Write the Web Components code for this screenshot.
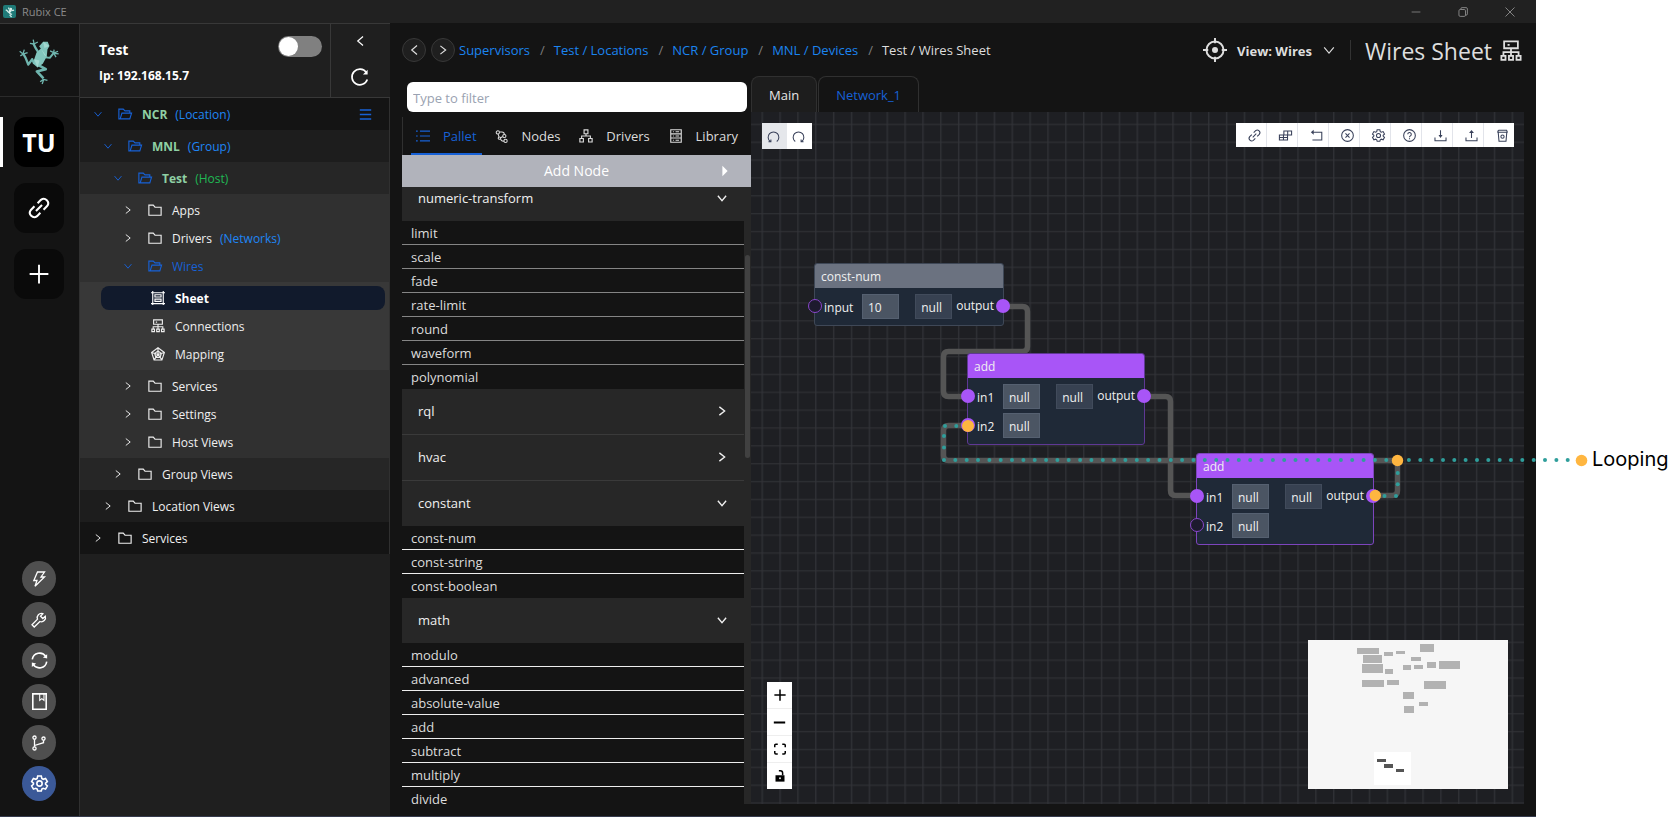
<!DOCTYPE html>
<html lang="en">
<head>
<meta charset="utf-8">
<title>Rubix CE</title>
<style>
  body { margin: 0; background: #fff; font-family: "Open Sans", "Noto Sans", sans-serif; font-size: 13px; }
</style>
</head>
<body>
<rx-app></rx-app>

<script>
const CSS = `
  *, *::before, *::after { box-sizing: border-box; }
  button { font: inherit; color: inherit; background: none; border: 0; padding: 0; margin: 0; cursor: pointer; }
  a { color: inherit; text-decoration: none; }
  ul { list-style: none; margin: 0; padding: 0; }
`;
function define(name, template) {
  customElements.define(name, class extends HTMLElement {
    connectedCallback() {
      if (this.shadowRoot) return;
      const root = this.attachShadow({ mode: 'open' });
      const html = typeof template === 'function' ? template(this) : template;
      root.innerHTML = `<style>${CSS}</style>${html}`;
    }
  });
}

/* Icons: 16-unit grid, drawn with the current colour */
const ICONS = {
  down: '<path d="M2.5 5 8 11.5 13.5 5"/>',
  right: '<path d="M4.5 2.5 11.5 8 4.5 13.5"/>',
  left: '<path d="M12 2 5 8l7 6"/>',
  folder: '<path d="M1 2.500h5l2 2.300h7v9.200H1z"/>',
  open: '<path d="M2.500 13.500H1V2.500h5l2 2h5.500V7M2.500 13.500 4.500 7h11l-2 6.500z"/>',
  menu: '<path d="M1 2.500h14M1 8h14M1 13.500h14" stroke-width="1.800"/>',
  reload: '<path d="M14.500 10.200A7 7 0 1 1 13.600 3.900"/><path d="M14.800 1.500v4.200h-4.200z" fill="currentColor" stroke="none"/>',
  link: '<path d="M7 4.500 9.400 2.100a3.200 3.200 0 0 1 4.500 4.500L11.300 9.200M9 11.500l-2.400 2.400a3.200 3.200 0 0 1-4.500-4.500L4.700 6.800M10.200 5.800 5.800 10.200"/>',
  plus: '<path d="M8 .5v15M.5 8h15"/>',
  minus: '<path d="M1 8h14"/>',
  bolt: '<path d="M6.500 1h7L10 6h3.500L4 15.300 6 9.500H2.800z"/>',
  wrench: '<path d="M14.300 4.200 11.800 6.500 9.500 4.200 11.800 1.700a4.200 4.200 0 0 0-5.300 5.500L1 12.800 3.200 15l5.700-5.500a4.200 4.200 0 0 0 5.400-5.300z"/>',
  sync: '<path d="M1.200 7A7 7 0 0 1 14 4.300M14.800 9A7 7 0 0 1 2 11.700"/><path d="M15.200 2v4.200l-4-1zM.8 14V9.800l4 1z" fill="currentColor" stroke="none"/>',
  book: '<path d="M1.700.8h12.600v14.500H1.700z"/><path d="M8.200 1v6l2-1.700 2 1.700V1" stroke-width="1"/>',
  branch: '<circle cx="3.500" cy="2.600" r="1.600"/><circle cx="3.500" cy="13.400" r="1.600"/><circle cx="12.500" cy="3.600" r="1.600"/><path d="M3.500 4.200v7.600M12.500 5.200v2.500L3.500 10.500"/>',
  gear: '<path d="M6.300 1h3.400l.5 2.200 1.300.8 2.200-.8 1.700 3-1.700 1.500v1l1.700 1.600-1.700 3-2.200-.8-1.300.8L9.700 15H6.300l-.5-1.700-1.300-.8-2.200.8-1.700-3 1.700-1.600v-1L.6 6.200l1.700-3 2.200.8 1.300-.8z"/><circle cx="8" cy="8" r="2.500"/>',
  sheet: '<path d="M2 0v16M14 0v16M0 2h16M0 14.500h16M4.500 4.300h7v2.500h-7zM4.500 9.300h7v2.500h-7z"/>',
  cluster: '<path d="M3 1h10v5H3zM8 6v5M2.500 11.200V8.800h11v2.400M1 11.500h3V14.500H1zM6.500 11.500h3V14.500h-3zM12 11.500h3V14.500h-3zM5.500 3.500h1.500"/>',
  radar: '<path d="M8 .8 15.300 6.200 12.500 14.800H3.500L.7 6.200zM8 4.500l3.800 2.800-1.400 4.500H5.600L4.200 7.300zM8 .8v7.700M15.300 6.200 8 8.500M12.500 14.800 8 8.500M3.500 14.800 8 8.500M.7 6.200 8 8.500"/>',
  list: '<path d="M4.500 2.500H16M4.500 8H16M4.500 13.500H16M0 2.500h2M0 8h2M0 13.500h2"/>',
  nodes: '<circle cx="3.500" cy="3" r="2"/><circle cx="11.500" cy="7.500" r="2"/><circle cx="5.500" cy="10" r="1.500"/><circle cx="13" cy="13.500" r="2"/><path d="M5.500 2.500h3a3 3 0 0 1 3 3M4 5 4.800 8.500M7 11a3 3 0 0 0 4 2.500M9.500 8 7 9.500"/>',
  tree: '<path d="M5.800 1h4.400v4.400H5.800zM1 10.800h4v4H1zM11 10.800h4v4h-4zM8 5.500V8M3 10.800V8h10v2.800"/>',
  server: '<path d="M2 .8h12v14.400H2zM2 5.500h12M2 10.300h12M4.500 3.200h1M4.500 8h1M4.500 12.800h1M7.500 3.200h4M7.500 8h4M7.500 12.800h4"/>',
  aim: '<circle cx="8" cy="8" r="5.700"/><circle cx="8" cy="8" r="2" fill="currentColor" stroke="none"/><path d="M8 0v3.500M8 12.500V16M0 8h3.500M12.500 8H16"/>',
  undo: '<path d="M4 14.200A6.600 6.600 0 1 1 12 14.200M1.800 14.500h3v-2.800"/>',
  redo: '<path d="M12 14.200A6.600 6.600 0 1 0 4 14.200M14.200 14.500h-3v-2.800"/>',
  blocks: '<path d="M6 2.500h9.500v5H6zM.5 7.500h10v6H.5zM10.700 2.500v5M5.500 7.500v6M.5 10.500h10"/>',
  rollback: '<path d="M2.500 4h12v9.500H3"/><path d="M4.500 1v6L1 4z" fill="currentColor" stroke="none"/>',
  close: '<circle cx="8" cy="8" r="7.200"/><path d="m5.500 5.500 5 5M10.500 5.500l-5 5"/>',
  help: '<circle cx="8" cy="8" r="7.200"/><path d="M5.800 6.500a2.200 2.200 0 1 1 3.200 2c-.7.400-1 .8-1 1.500M8 11.300v1.200"/>',
  download: '<path d="M1.200 10.500v4h13.600v-4M8 1.500V9"/><path d="M5.500 7.500h5L8 11z" fill="currentColor" stroke="none"/>',
  upload: '<path d="M1.200 10.500v4h13.600v-4M8 11V4"/><path d="M5 5h6L8 1.200z" fill="currentColor" stroke="none"/>',
  bin: '<path d="M1.500 4h13M3 1.500h10l1 2.500M3 1.500 2 4M2.700 4l1 11h8.600l1-11"/><circle cx="8" cy="9.500" r="2"/>',
  fit: '<path d="M1 5.500V3A1.500 1.500 0 0 1 2.500 1.500h2.500M11 1.500h2.500A1.500 1.500 0 0 1 15 3v2.500M15 10.500V13a1.500 1.500 0 0 1-1.500 1.500H11M5 14.500H2.500A1.500 1.500 0 0 1 1 13v-2.500"/>',
  lock: '<path d="M2 7h12v8.500H2z" fill="currentColor" stroke="none"/><path d="M6.500 1h2A3 3 0 0 1 11.500 4v3"/><circle cx="8" cy="11" r="1.200" fill="#fff" stroke="none"/>',
  caret: '<path d="M5 2v12l6-6z" fill="currentColor" stroke="none"/>',
  winmin: '<path d="M1 8h14"/>',
  winmax: '<rect x="1.500" y="4" width="10.500" height="11" rx="2"/><path d="M4.500 4V3a2 2 0 0 1 2-2H13a2 2 0 0 1 2 2v8a2 2 0 0 1-2 2h-1"/>',
  winclose: '<path d="m.8.800 14.400 14.400M15.200.800.8 15.200"/>',
  frog: '<g fill="currentColor" stroke="none"><path d="M8.300 1.200 11 1.500 11.500 4 10 7 7.500 10.500 5.500 9.500 6 6z"/></g><path d="M7 4 5.500 1M10.500 6l4-1M6 9 3.500 6 1.200 4.500M7 10l3 1.500-2 1.500 2.500 3"/>'
};
define('rx-icon', el => `
  <style>
    :host { display: inline-flex; flex: none; }
    svg { display: block; overflow: visible; }
  </style>
  <svg width="${el.getAttribute('size') || 14}" height="${el.getAttribute('size') || 14}" viewBox="0 0 16 16" fill="none"
    stroke="currentColor" stroke-width="${el.getAttribute('weight') || 1.3}" aria-hidden="true">${ICONS[el.getAttribute('name')] || ''}</svg>`);

define('rx-app', `
  <style>
    :host { display: block; margin-right: 132px; }
    .app { display: flex; flex-direction: column; height: 100vh; background: #141414; border-bottom: 1px solid #353a4c; }
    .body { flex: 1; display: flex; min-height: 0; }
    main { flex: 1; min-width: 0; display: flex; flex-direction: column; padding: 0 12px; }
    .work { flex: 1; min-height: 0; display: grid; grid-template-columns: 349px minmax(0, 1fr); padding-bottom: 12px; }
  </style>
  <div class="app">
    <rx-titlebar></rx-titlebar>
    <div class="body">
      <rx-rail></rx-rail>
      <rx-host-panel></rx-host-panel>
      <main>
        <rx-topbar></rx-topbar>
        <div class="work">
          <rx-palette></rx-palette>
          <rx-sheet></rx-sheet>
        </div>
      </main>
    </div>
  </div>`);

define('rx-titlebar', `
  <style>
    :host { display: flex; align-items: center; height: 23px; background: #212121; color: #8a8a8a; font-size: 11px; padding: 0 3px; }
    .logo { display: grid; place-items: center; width: 13px; height: 13px; margin-right: 6px; border-radius: 2px; background: #1f7a78; color: #d6eeea; }
    .title { flex: 1; }
    button { display: grid; place-items: center; width: 47px; height: 23px; }
  </style>
  <span class="logo"><rx-icon name="frog" size="10" weight="2"></rx-icon></span>
  <span class="title">Rubix CE</span>
  <button aria-label="Minimise"><rx-icon name="winmin" size="10"></rx-icon></button>
  <button aria-label="Restore"><rx-icon name="winmax" size="10" weight="1.500"></rx-icon></button>
  <button aria-label="Close"><rx-icon name="winclose" size="10" weight="1.500"></rx-icon></button>`);

define('rx-rail', `
  <style>
    :host { display: flex; flex-direction: column; align-items: center; width: 80px; flex: none; border-right: 1px solid #303030; border-top: 1px solid #383838; color: #fff; padding-bottom: 15px; }
    .brand { display: grid; place-items: center; width: 100%; height: 73px; padding-top: 2px; border-bottom: 1px solid #2b2b2b; }
    .spaces { display: flex; flex-direction: column; align-items: center; gap: 16px; width: 100%; margin-top: 20px; flex: 1; }
    .spaces div { width: 100%; display: flex; justify-content: center; border: solid transparent; border-width: 0 4px 0 3px; }
    .spaces .on { border-left-color: #fff; }
    .spaces button { width: 50px; height: 50px; border-radius: 12px; background: #0a0a0a; display: grid; place-items: center; }
    .spaces .on button { background: #000; font-size: 25px; font-weight: 700; line-height: 34px; }
    nav { display: flex; flex-direction: column; gap: 6px; padding-right: 1px; }
    nav button { width: 34px; height: 35px; border-radius: 50%; background: #4f4f4f; display: grid; place-items: center; }
    nav button.cfg { background: #3b5998; }
  </style>
  <div class="brand">
    <svg width="41" height="47" viewBox="58 118 124 142" role="img" aria-label="Rubix">
      <g fill="none" stroke="#6fb5ae" stroke-linejoin="round">
        <path d="M117 162 108 148 102 135" stroke-width="7"/>
        <path d="M104 196 98 182 86 198 78 178 70 164" stroke-width="7"/>
        <path d="M138 176 151 178 163 163" stroke-width="6"/>
        <path d="M110 196 139 212 112 219 132 240" stroke-width="8"/>
        <path d="M91 134 103 136 115 130M101 123 104 138M60 158 70 166 74 153M62 172 72 166 84 162M152 157 165 163 176 158M164 153 163 164 170 176M178 166 163 164M122 250 132 243 144 246M128 257 133 243" stroke-width="4"/>
      </g>
      <path d="M119 143 131 129 145 129 150 142 144 153 142 174 130 196 114 207 101 196 104 182 111 162 124 150z" fill="#82c5bd"/>
      <path d="M131 129 135 148 150 142M124 150 135 170 142 174M104 182 120 186 114 207z" fill="#a3d8d0"/>
    </svg>
  </div>
  <div class="spaces">
    <div class="on"><button>TU</button></div>
    <div><button aria-label="Connections"><rx-icon name="link" size="22" weight="1.500"></rx-icon></button></div>
    <div><button aria-label="Add"><rx-icon name="plus" size="20" weight="1.500"></rx-icon></button></div>
  </div>
  <nav aria-label="Tools">
    <button aria-label="Actions"><rx-icon name="bolt" size="16"></rx-icon></button>
    <button aria-label="Tools"><rx-icon name="wrench" size="16"></rx-icon></button>
    <button aria-label="Sync"><rx-icon name="sync" size="17" weight="1.500"></rx-icon></button>
    <button aria-label="Docs"><rx-icon name="book" size="17" weight="1.500"></rx-icon></button>
    <button aria-label="Releases"><rx-icon name="branch" size="16"></rx-icon></button>
    <button class="cfg" aria-label="Settings"><rx-icon name="gear" size="17" weight="1.500"></rx-icon></button>
  </nav>`);

/* One tree row: level sets the indent; leaf names the icon of a page inside a folder */
define('rx-row', el => {
  const a = n => el.getAttribute(n);
  const open = el.hasAttribute('open');
  const leaf = a('leaf');
  return `
  <style>
    :host { display: block; color: #f0f0f0; font-size: 12px; line-height: 16px; }
    button { display: flex; align-items: center; width: 100%; height: ${a('h') || 28}px; text-align: left; padding-left: ${13 + 10 * (a('level') || 0)}px; }
    .chev { margin-right: 15px; }
    .icon { margin-right: 10px; }
    .blue { color: #1761d6; }
    .text { display: flex; gap: 8px; padding-top: 2px; }
    .main { color: #8fd0a4; font-weight: 700; }
    ::slotted(i) { font-style: normal; color: ${a('tone') || '#1f86f5'}; }
    .cell { padding: 2px 4px 2px 21px; }
    .leaf { height: 24px; padding-left: 50px; border-radius: 8px; color: #eee; }
    .sel { background: #111a2c; color: #fff; font-weight: 700; }
  </style>
  ${leaf ? `<div class="cell"><button class="leaf ${el.hasAttribute('selected') ? 'sel' : ''}"><rx-icon class="icon" name="${leaf}" size="14"></rx-icon><span class="text"><slot></slot></span></button></div>`
  : `<button aria-expanded="${open}">
    <rx-icon class="chev ${open ? 'blue' : ''}" name="${open ? 'down' : 'right'}" size="10" weight="1.500"></rx-icon>
    <rx-icon class="icon ${open ? 'blue' : ''}" name="${open ? 'open' : 'folder'}" size="14"></rx-icon>
    <span class="text ${el.hasAttribute('plain') ? 'blue' : ''}"><span class="${open && !el.hasAttribute('plain') ? 'main' : ''}"><slot></slot></span><slot name="kind"></slot></span>
  </button>`}`;
});

define('rx-host-panel', `
  <style>
    :host { display: flex; flex-direction: column; width: 310px; flex: none; background: #1f1f1f; color: #fff; border-top: 1px solid #383838; }
    header { display: flex; height: 74px; border-bottom: 1px solid #383838; }
    .info { flex: 1; padding: 12px 8px 0 19px; display: flex; justify-content: space-between; }
    .info strong { display: block; font-size: 14px; line-height: 28px; }
    .info small { display: block; font-size: 12px; font-weight: 700; line-height: 24px; }
    input { appearance: none; margin: 0; width: 44px; height: 21px; border-radius: 11px; background: #808080; display: flex; align-items: center; padding: 1px; }
    input::before { content: ""; width: 19px; height: 19px; border-radius: 50%; background: #fff; }
    .side { width: 60px; border-left: 1px solid #383838; display: flex; flex-direction: column; align-items: center; gap: 21px; padding: 11px 2px 0 0; }
    .side button { display: flex; }
    .tree { border-right: 1px solid #303030; }
    .l0 { background: #141414; } .l1 { background: #1d1d1d; } .l2 { background: #262626; }
    .l3 { background: #303030; padding: 2px 0; } .l4 { background: #383838; padding: 2px 0; }
    .l0.head { position: relative; }
    .menu { position: absolute; right: 17px; top: 10px; color: #1761d6; display: flex; }
  </style>
  <header>
    <div class="info">
      <div><strong>Test</strong><small>Ip: 192.168.15.7</small></div>
      <input type="checkbox" role="switch" aria-label="Enable host">
    </div>
    <div class="side">
      <button aria-label="Collapse"><rx-icon name="left" size="12" weight="1.600"></rx-icon></button>
      <button aria-label="Refresh"><rx-icon name="reload" size="18" weight="1.500"></rx-icon></button>
    </div>
  </header>
  <div class="tree">
    <div class="l0 head"><rx-row h="32" level="0" open>NCR<i slot="kind">(Location)</i></rx-row><button class="menu" aria-label="Menu"><rx-icon name="menu" size="13"></rx-icon></button></div>
    <div class="l1"><rx-row h="32" level="1" open>MNL<i slot="kind">(Group)</i></rx-row></div>
    <div class="l2"><rx-row h="32" level="2" open tone="#20b854">Test<i slot="kind">(Host)</i></rx-row></div>
    <div class="l3">
      <rx-row level="3">Apps</rx-row>
      <rx-row level="3">Drivers<i slot="kind">(Networks)</i></rx-row>
      <rx-row level="3" open plain>Wires</rx-row>
    </div>
    <div class="l4">
      <rx-row leaf="sheet" selected>Sheet</rx-row>
      <rx-row leaf="cluster">Connections</rx-row>
      <rx-row leaf="radar">Mapping</rx-row>
    </div>
    <div class="l3">
      <rx-row level="3">Services</rx-row>
      <rx-row level="3">Settings</rx-row>
      <rx-row level="3">Host Views</rx-row>
    </div>
    <div class="l2"><rx-row h="32" level="2">Group Views</rx-row></div>
    <div class="l1"><rx-row h="32" level="1">Location Views</rx-row></div>
    <div class="l0"><rx-row h="32" level="0">Services</rx-row></div>
  </div>`);

define('rx-topbar', `
  <style>
    :host { display: flex; align-items: center; height: 53px; color: #dedede; line-height: 20px; padding-top: 1px; }
    .nav { display: flex; gap: 5px; margin-right: 4px; }
    .nav button { width: 24px; height: 24px; border-radius: 50%; background: #1f1f1f; border: 1px solid #383838; display: grid; place-items: center; }
    ol { display: flex; list-style: none; margin: 0; padding: 0; flex: 1; }
    li a { color: #1b84f0; }
    li + li::before { content: "/"; color: #7d7d7d; margin: 0 9px 0 10px; }
    .view { display: flex; align-items: center; gap: 10px; font-weight: 700; }
    .view span { display: block; padding-top: 1px; }
    .sep { width: 1px; height: 20px; background: #333; margin: 0 14px; }
    h1 { margin: 0; font-size: 23px; font-weight: 500; line-height: 32px; padding-top: 2px; display: flex; align-items: center; gap: 8px; padding-right: 2px; }
  </style>
  <div class="nav">
    <button aria-label="Back"><rx-icon name="left" size="12" weight="1.600"></rx-icon></button>
    <button aria-label="Forward"><rx-icon name="right" size="12" weight="1.600"></rx-icon></button>
  </div>
  <ol>
    <li><a href="#supervisors">Supervisors</a></li>
    <li><a href="#locations">Test / Locations</a></li>
    <li><a href="#group">NCR / Group</a></li>
    <li><a href="#devices">MNL / Devices</a></li>
    <li>Test / Wires Sheet</li>
  </ol>
  <button class="view" aria-haspopup="menu"><rx-icon name="aim" size="24"></rx-icon><span>View: Wires</span><rx-icon name="down" size="14"></rx-icon></button>
  <span class="sep"></span>
  <h1>Wires Sheet<rx-icon name="cluster" size="22"></rx-icon></h1>`);

const GROUPS = [
  ['numeric-transform', ['limit', 'scale', 'fade', 'rate-limit', 'round', 'waveform', 'polynomial'], 'dim'],
  ['rql'], ['hvac'],
  ['constant', ['const-num', 'const-string', 'const-boolean']],
  ['math', ['modulo', 'advanced', 'absolute-value', 'add', 'subtract', 'multiply', 'divide']]
];
define('rx-palette', `
  <style>
    :host { display: flex; flex-direction: column; min-height: 0; color: #dcdcdc; line-height: 18px; }
    .filter { margin: 6px 4px 5px 5px; height: 30px; border: 0; border-radius: 6px; background: #fff; padding: 2px 7px 0 6px; font: inherit; color: #222; }
    .filter::placeholder { color: #9aa2b1; opacity: 1; }
    .tabs { display: flex; height: 38px; border-left: 1px solid #303030; padding: 0 8px; justify-content: space-between; }
    .tabs button { display: flex; align-items: center; gap: 13px; padding: 2px 5px 0; border-bottom: 2px solid transparent; }
    .tabs .on { color: #1761d6; border-color: #1761d6; }
    .add { height: 32px; flex: none; background: #b1b3bb; color: #fff; font-size: 14px; display: grid; grid-template-columns: 1fr auto 1fr; align-items: center; }
    .add rx-icon { justify-self: end; margin-right: 19px; }
    .scroll { flex: 1; min-height: 0; display: grid; grid-template-columns: minmax(0, 1fr) 7px; overflow: hidden; margin-bottom: -6px; }
    .list { margin-top: -11px; height: 0; }
    .group { width: 100%; height: 45px; display: flex; align-items: center; justify-content: space-between; padding: 0 16px 2px; background: #272727; color: #f0f0f0; }
    .group.closed { height: 46px; border-bottom: 1px solid #3a3a3a; }
    li { height: 24px; padding: 3px 9px 0; border-bottom: 1px solid #eee; }
    .dim li { border-color: #858585; }
    ul li:last-child { border-color: transparent; }
    .bar { margin-bottom: 6px; padding: 68px 1px 0; background: #272727; }
    .bar div { height: 203px; border-radius: 3px; background: #414141; }
  </style>
  <input class="filter" type="text" placeholder="Type to filter" aria-label="Filter nodes">
  <div class="tabs">
    <button class="on"><rx-icon name="list" size="14"></rx-icon>Pallet</button>
    <button><rx-icon name="nodes" size="13"></rx-icon>Nodes</button>
    <button><rx-icon name="tree" size="14"></rx-icon>Drivers</button>
    <button><rx-icon name="server" size="14"></rx-icon>Library</button>
  </div>
  <button class="add"><span></span>Add Node<rx-icon name="caret" size="14"></rx-icon></button>
  <div class="scroll">
    <div class="list">${GROUPS.map(([name, items, cls]) => `
      <button class="group ${items ? '' : 'closed'}">${name}<rx-icon name="${items ? 'down' : 'right'}" size="12" weight="1.800"></rx-icon></button>
      ${items ? `<ul class="${cls || ''}">${items.map(i => `<li>${i}</li>`).join('')}</ul>` : ''}`).join('')}
    </div>
    <div class="bar"><div></div></div>
  </div>`);

/* A flow node: inputs come from the "in" attribute as name:value pairs, a third part marks a wired port */
define('rx-node', el => {
  const tone = el.getAttribute('tone'), edge = el.getAttribute('edge');
  const ins = el.getAttribute('in').split(',').map(s => s.split(':'));
  return `
  <style>
    :host { display: block; color: #f0f0f0; font-size: 12px; line-height: 16px; }
    .node { background: #1f2937; border: 1px solid ${edge}; border-radius: 3px; }
    .title { height: 24px; padding: 5px 6px 0; background: ${tone}; border-radius: 2px 2px 0 0; }
    .ports { display: grid; grid-template-columns: auto 1fr; padding: 6px 0; }
    .ins { display: grid; grid-template-columns: ${el.getAttribute('cols')} 37px; gap: 4px 0; }
    .ins label { display: contents; }
    .name { padding: 6px 0 0 9px; position: relative; }
    input, output { width: 37px; height: 25px; border: 1px solid #556070; background: #4b5563; color: inherit; font: inherit; line-height: 16px; padding: 2px 4px 0 5px; }
    .out { display: flex; justify-content: flex-end; position: relative; height: 25px; padding-right: 9px; gap: 4px; }
    .out span { padding-top: 4px; }
    output { background: #374151; border-color: #414b5b; padding-top: 5px; }
    b { position: absolute; left: -7px; top: 5px; width: 14px; height: 14px; border-radius: 50%; background: #a855f7; }
    b.off { background: #1d1a2e; border: 1px solid #8a46cc; }
    b.end { left: auto; right: -7px; }
  </style>
  <div class="node">
    <div class="title"><slot></slot></div>
    <div class="ports">
      <div class="ins">${ins.map(([n, v, on]) => `<label><span class="name"><b class="${on ? '' : 'off'}"></b>${n}</span><input value="${v}"></label>`).join('')}</div>
      <div class="out"><output>null</output><span>output</span><b class="end"></b></div>
    </div>
  </div>`;
});

/* Evenly spaced dots of the loop marker */
const dots = (x1, y1, x2, y2, n) => Array.from({ length: n + 1 }, (_, i) =>
  `<circle cx="${(x1 + (x2 - x1) * i / n).toFixed(1)}" cy="${(y1 + (y2 - y1) * i / n).toFixed(1)}" r="2"/>`).join('');
const MAP = [[49,8,22,6],[55,15,19,8],[76,12,9,4],[88,11,9,3],[54,24,21,9],[77,29,8,5],[95,25,8,5],[106,25,9,4],[103,17,10,4],[112,4,14,8],[119,22,9,6],[131,21,21,8],[54,40,22,7],[79,40,12,5],[116,41,22,8],[95,52,11,7],[111,62,9,4],[96,66,10,7]];

define('rx-sheet', `
  <style>
    :host { display: flex; flex-direction: column; min-width: 0; color: #e6e6e6; line-height: 18px; }
    .tabs { display: flex; gap: 1px; height: 36px; }
    .tabs button { border: 1px solid #303030; border-bottom: 0; border-radius: 8px 8px 0 0; padding: 0 17px; color: #1761d6; }
    .tabs .on { background: #1d1d1d; color: #e6e6e6; }
    .stage { position: relative; flex: 1; background: #1e1f23; }
    .grid, .wires { position: absolute; left: 0; top: 0; width: 100%; height: 100%; }
    .wires { overflow: visible; pointer-events: none; }
    rx-node { position: absolute; }
    .history, .tools, .zoom, .map { position: absolute; }
    .history { left: 11px; top: 11px; display: flex; background: #fff; color: #39415a; }
    .history button { width: 25px; height: 26px; padding-right: 2px; display: grid; place-items: center; }
    .history .dis { background: #e5e7eb; }
    .tools { right: 10px; top: 11px; display: flex; background: #fff; color: #39415a; }
    .tools button { width: 31px; height: 24px; padding-left: 6px; display: grid; place-items: center; border-right: 1px solid #e2e4ea; }
    .tools button:last-child { border: 0; width: 30px; }
    .zoom { left: 16px; bottom: 15px; background: #fff; color: #000; display: flex; flex-direction: column; }
    .zoom button { width: 25px; height: 27px; display: grid; place-items: center; border-bottom: 1px solid #eee; }
    .zoom button:last-child { border: 0; height: 26px; }
    .map { right: 16px; bottom: 15px; background: #f6f6f6; }
    .call { position: absolute; left: 841px; top: 334px; font: 20px/26px Inter, sans-serif; color: #000; white-space: nowrap; }
  </style>
  <div class="tabs"><button class="on">Main</button><button>Network_1</button></div>
  <div class="stage">
    <svg class="grid" aria-hidden="true">
      <defs><pattern id="g" x="10.500" y="11.700" width="17.860" height="17.860" patternUnits="userSpaceOnUse"><path d="M0 .75H18M.75 0V18" stroke="#323338" stroke-width="1.200"/></pattern></defs>
      <rect width="100%" height="100%" fill="url(#g)"/>
    </svg>
    <svg class="wires" aria-hidden="true">
      <g transform="translate(-751 -112)" fill="none" stroke="#555" stroke-width="5.500">
        <path d="M1003 306.500H1022.500Q1027.500 306.500 1027.500 311.500V346.500Q1027.500 351.500 1022.500 351.500H948.500Q943.500 351.500 943.500 356.500V391.500Q943.500 396.500 948.500 396.500H967"/>
        <path d="M1144 396.500H1165.500Q1170.500 396.500 1170.500 401.500V490.500Q1170.500 495.500 1175.500 495.500H1196"/>
        <path d="M967 425.500H948.500Q943.500 425.500 943.500 430.500V455.500Q943.500 460.500 948.500 460.500H1392.500Q1397.500 460.500 1397.500 465.500V490.500Q1397.500 495.500 1392.500 495.500H1373"/>
      </g>
    </svg>
    <rx-node style="left:63px;top:151px;width:190px" tone="#6b7280" edge="#3f4857" cols="47px" in="input:10">const-num</rx-node>
    <rx-node style="left:216px;top:241px;width:178px" tone="#a855f7" edge="#5f3894" cols="35px" in="in1:null:1,in2:null:1">add</rx-node>
    <rx-node style="left:445px;top:341px;width:178px" tone="#a855f7" edge="#7d45bd" cols="35px" in="in1:null:1,in2:null">add</rx-node>
    <svg class="wires" aria-hidden="true">
      <g transform="translate(-751 -112)" fill="#2f9e9b">
        ${dots(944, 460, 1567.7, 460, 55)}${dots(944, 436, 944, 447.5, 1)}${dots(945, 426, 956.3, 426, 1)}
        ${dots(1397.7, 473, 1397.7, 484.3, 1)}${dots(1384.5, 496, 1396, 496, 1)}
        <g fill="#ffb640"><circle cx="968" cy="426" r="6"/><circle cx="1397.500" cy="460.500" r="5.700"/><circle cx="1375.300" cy="495.500" r="5.700"/><circle cx="1581.500" cy="460.500" r="5.800"/></g>
      </g>
    </svg>
    <div class="call">Looping</div>
    <div class="history">
      <button class="dis" aria-label="Undo"><rx-icon name="undo" size="13"></rx-icon></button>
      <button aria-label="Redo"><rx-icon name="redo" size="13"></rx-icon></button>
    </div>
    <div class="tools">
      ${[['link', 'Link'], ['blocks', 'Blocks'], ['rollback', 'Revert'], ['close', 'Clear'], ['gear', 'Settings'], ['help', 'Help'], ['download', 'Import'], ['upload', 'Export'], ['bin', 'Delete']]
        .map(([i, l]) => `<button aria-label="${l}"><rx-icon name="${i}" size="13" weight="1.300"></rx-icon></button>`).join('')}
    </div>
    <div class="zoom">
      <button aria-label="Zoom in"><rx-icon name="plus" size="12" weight="2"></rx-icon></button>
      <button aria-label="Zoom out"><rx-icon name="minus" size="13" weight="2.500"></rx-icon></button>
      <button aria-label="Fit view"><rx-icon name="fit" size="12" weight="2"></rx-icon></button>
      <button aria-label="Lock"><rx-icon name="lock" size="12" weight="2"></rx-icon></button>
    </div>
    <svg class="map" width="200" height="149" aria-label="Minimap" role="img">
      <g fill="#b2b2b2">${MAP.map(([x, y, w, h]) => `<rect x="${x}" y="${y}" width="${w}" height="${h}"/>`).join('')}</g>
      <path d="M66 112h37v33H66z" fill="#fff"/>
      <path d="M69 119h9v3h-9zM76 124h9v4h-9zM88 129h8v3h-8z" fill="#555"/>
    </svg>
  </div>`);
</script>
</body>
</html>
